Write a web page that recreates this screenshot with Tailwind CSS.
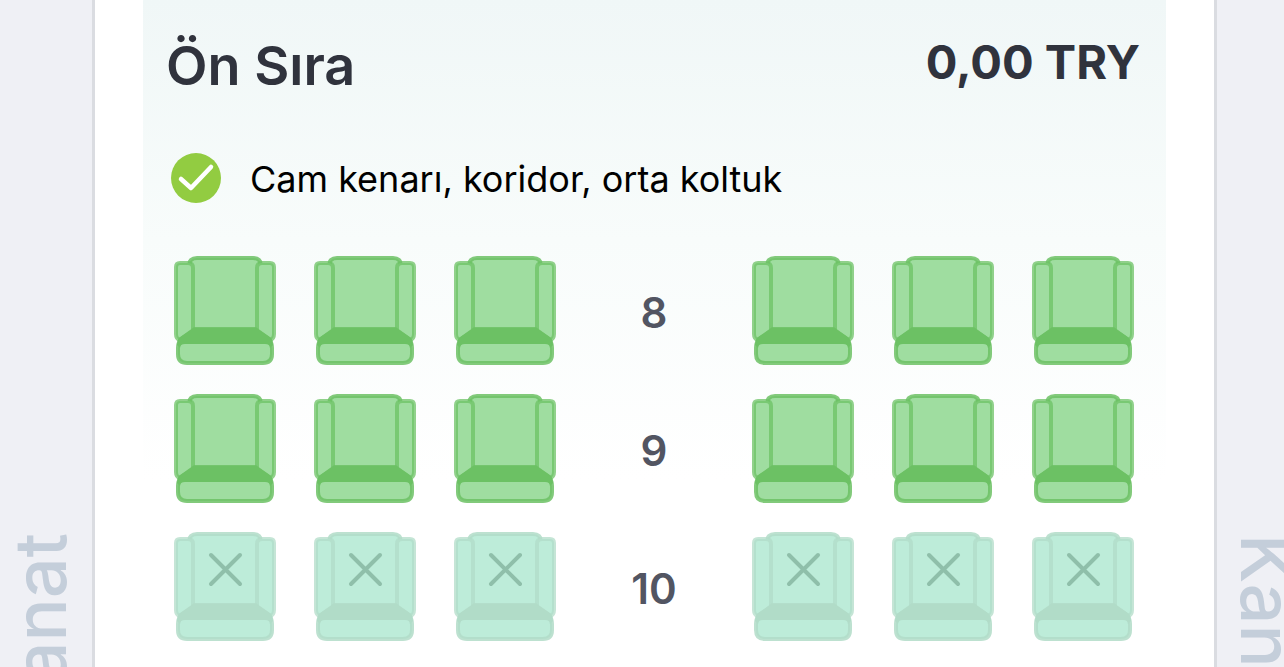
<!DOCTYPE html>
<html lang="tr">
<head>
    <meta charset="UTF-8">
    <meta name="viewport" content="width=device-width, initial-scale=1.0">
    <title>Koltuk Seçimi</title>
    <script src="https://cdn.jsdelivr.net/npm/@tailwindcss/browser@4"></script>
</head>
<body class="bg-white font-['Inter',sans-serif]">
    <!-- Seat shapes, coloured by fill and text colour -->
    <svg class="hidden">
        <symbol id="seat" viewBox="0 0 102 109">
            <path d="M16 84V9Q15 6 17 4Q19 2 23 2H79Q83 2 85 4Q87 6 86 9V84Z" stroke="currentColor" stroke-width="4" stroke-opacity=".85" />
            <path d="M2 78V11Q2 7 6 7H14Q19 7 19 12V75L6 84Q2 83 2 78Z" stroke="currentColor" stroke-width="4" stroke-opacity=".75" />
            <path d="M100 78V11Q100 7 96 7H88Q83 7 83 12V75L96 84Q100 83 100 78Z" stroke="currentColor" stroke-width="4" stroke-opacity=".75" />
            <path d="M4 92Q4 87 7 83L21 73H81L95 83Q98 87 98 92V98Q98 107 89 107H13Q4 107 4 98Z" stroke="currentColor" stroke-width="4" stroke-opacity=".85" stroke-linejoin="round" />
            <path d="M3 89Q3 85 5 82L20 72H82L97 82Q99 85 99 89L96 92Q96 88 91 88H11Q6 88 6 92Z" fill="currentColor" />
        </symbol>
        <symbol id="cross" viewBox="0 0 102 109">
            <path d="M37 23L66 52M66 23L37 52" fill="none" stroke="#8fbfaa" stroke-width="4" stroke-linecap="round" />
        </symbol>
    </svg>

    <div class="flex h-screen overflow-hidden">
        <!-- Left wing -->
        <aside class="w-[95px] shrink-0 overflow-hidden bg-[#eff0f5] border-r-3 border-[#dadce1] pt-[528px] flex">
            <span class="h-[204px] shrink-0 rotate-180 [writing-mode:vertical-rl] text-[72px] leading-[80px] font-medium text-[#c4ceda]">Kanat</span>
        </aside>

        <main class="flex-1 px-12">
            <section class="bg-linear-to-b/srgb from-[#f0f7f7] via-[#f8fcfb] via-[240px] to-white to-[480px] pl-[31px] pr-8">
                <header class="flex justify-between items-start pt-7 -ml-2 -mr-1.5">
                    <h1 class="text-[54px] leading-[76px] font-semibold text-[#30333d]">Ön Sıra</h1>
                    <p class="text-[47px] leading-[68px] font-bold text-[#30333d]">0,00 TRY</p>
                </header>

                <div class="flex items-center gap-7 mt-12 -ml-1">
                    <svg class="size-[52px]" viewBox="0 0 52 52" fill="none">
                        <circle cx="26" cy="26" r="25" fill="#92cc41" />
                        <path d="M11 27L21 36L41 15" stroke="#fff" stroke-width="4.5" stroke-linecap="round" stroke-linejoin="round" />
                    </svg>
                    <p class="text-[36px] leading-[50px] pt-[2px] text-black">Cam kenarı, koridor, orta koltuk</p>
                </div>

                <!-- Rows -->
                <div id="rows" class="mt-[52px] flex flex-col gap-[29px]"></div>
            </section>
        </main>

        <!-- Right wing -->
        <aside class="w-[70px] shrink-0 overflow-hidden bg-[#eff0f5] border-l-3 border-[#dadce1] pt-[534px] pl-2.5 flex">
            <span class="h-[204px] shrink-0 [writing-mode:vertical-rl] text-[72px] leading-[80px] font-medium text-[#c4ceda]">Kanat</span>
        </aside>
    </div>

    <script>
        const rows = [
            { number: 8, free: true },
            { number: 9, free: true },
            { number: 10, free: false },
        ];

        function seat(row, letter) {
            const color = row.free ? 'fill-[#9fdda0] text-[#6cc164]' : 'fill-[#bdecd9] text-[#b1dcc8]';
            return `
                <button type="button" aria-label="Koltuk ${row.number}${letter}" ${row.free ? '' : 'disabled'}>
                    <svg class="block w-[102px] h-[109px] ${color}">
                        <use href="#seat" />
                        ${row.free ? '' : '<use href="#cross" />'}
                    </svg>
                </button>`;
        }

        document.getElementById('rows').innerHTML = rows.map(row => `
            <div class="flex justify-between items-center">
                <div class="flex gap-[38px]">${['A', 'B', 'C'].map(l => seat(row, l)).join('')}</div>
                <span class="text-[42px] leading-[52px] pt-1 font-semibold text-[#525562]">${row.number}</span>
                <div class="flex gap-[38px]">${['D', 'E', 'F'].map(l => seat(row, l)).join('')}</div>
            </div>`).join('');
    </script>
</body>
</html>
